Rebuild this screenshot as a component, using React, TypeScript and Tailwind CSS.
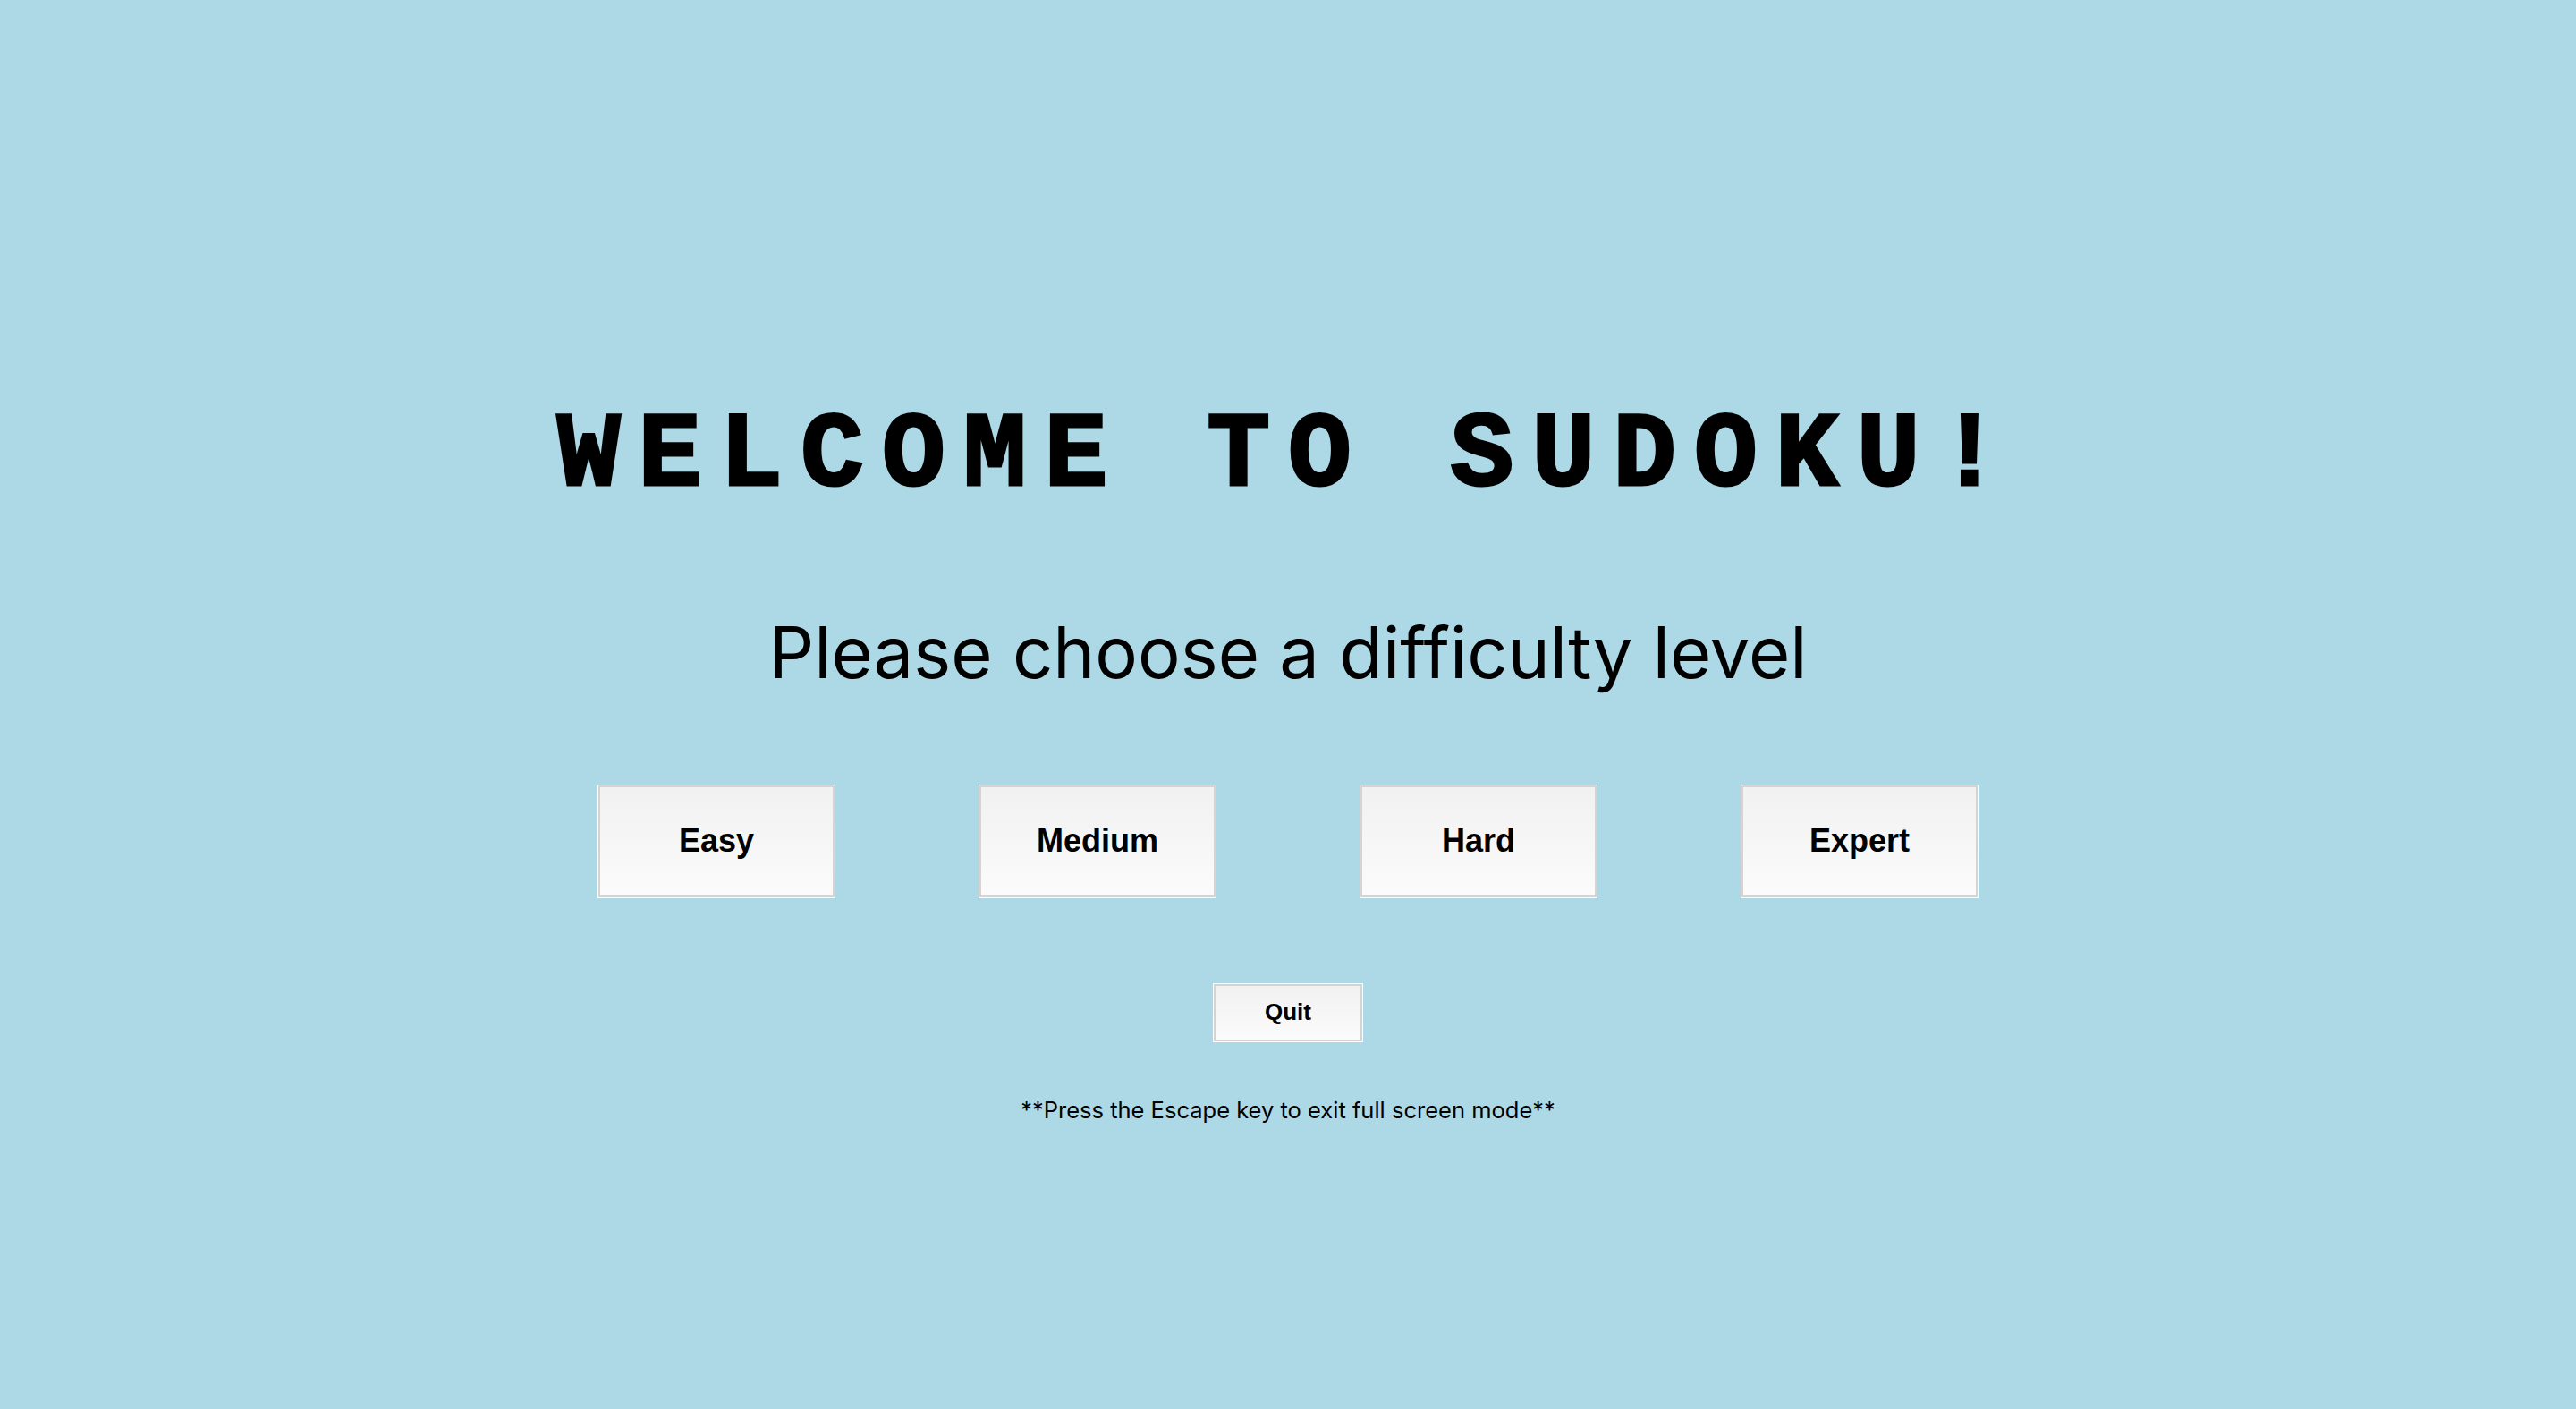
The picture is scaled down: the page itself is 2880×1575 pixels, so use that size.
import React from 'react';

const levels = ['Easy', 'Medium', 'Hard', 'Expert'];

function Box({ children, className }: { children: React.ReactNode; className: string }) {
  return (
    <button className={`border border-white bg-white p-0 ${className}`}>
      <div className="flex h-full w-full items-center justify-center border-2 border-[#d4d4d4] bg-gradient-to-b from-[#f1f1f1] to-[#fbfbfb] font-['Liberation_Sans',Arial,sans-serif] font-bold text-black">
        {children}
      </div>
    </button>
  );
}

export default function App() {
  return (
    <div className="min-h-screen bg-[#add8e6] flex flex-col items-center pt-[452px]">
      <h1 className="font-['Liberation_Mono','Courier_New',monospace] font-bold text-[118px] leading-none tracking-[20px] text-black [-webkit-text-stroke:3px_black]">
        WELCOME TO SUDOKU!
      </h1>
      <p className="mt-[120px] font-['Inter',sans-serif] text-[79.5px] leading-none text-black">
        Please choose a difficulty level
      </p>
      <div className="mt-[107px] flex gap-[160px]">
        {levels.map((level) => (
          <Box key={level} className="w-[266px] h-[127px]">
            <span className="text-[36px]">{level}</span>
          </Box>
        ))}
      </div>
      <Box className="mt-[95px] w-[168px] h-[66px]">
        <span className="text-[26px]">Quit</span>
      </Box>
      <p className="mt-[63px] font-['Inter',sans-serif] text-[25.5px] leading-none text-black">
        **Press the Escape key to exit full screen mode**
      </p>
    </div>
  );
}
